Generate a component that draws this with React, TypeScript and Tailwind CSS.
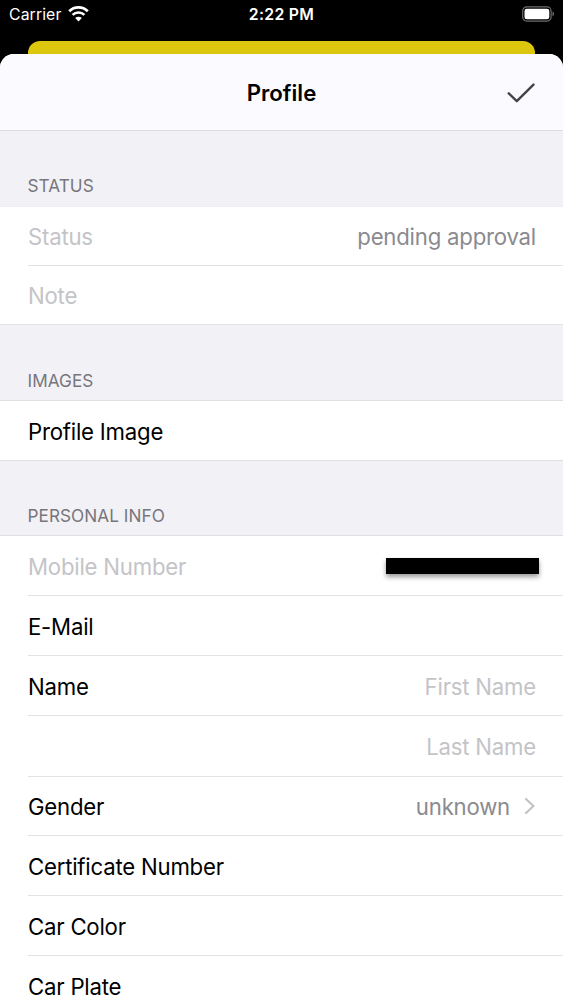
import type { ReactNode } from "react";

function StatusBar() {
  return (
    <div className="grid h-[41px] grid-cols-3 px-[9px] pt-[5px] text-white">
      <div className="flex h-5 items-center gap-[7px]">
        <span className="text-[15.8px] tracking-[0.1px]">Carrier</span>
        <svg width="21" height="16" viewBox="0 0 21 16" fill="none" stroke="currentColor" className="-mt-0.5">
          <path d="M1.2 5.3a13.2 13.2 0 0 1 18.6 0" strokeWidth="2.7" />
          <path d="M4.6 8.8a8.4 8.4 0 0 1 11.8 0" strokeWidth="2.5" />
          <path d="M10.5 15.4 7.2 12a4.7 4.7 0 0 1 6.6 0Z" fill="currentColor" stroke="none" />
        </svg>
      </div>
      <div className="flex h-5 items-center justify-center text-[15.8px] font-semibold tracking-[0.3px]">2:22 PM</div>
      <div className="-mr-px flex h-5 items-center justify-end">
        <svg width="33" height="16" viewBox="0 0 33 16" fill="none" className="-mt-0.5">
          <rect x="0.7" y="0.9" width="28.4" height="14.2" rx="4" stroke="#6d6d6d" strokeWidth="1.2" />
          <rect x="2.5" y="2.7" width="24.8" height="10.6" rx="2.4" fill="white" />
          <path d="M30.5 5.6c2.2 1.1 2.2 3.7 0 4.8Z" fill="#6d6d6d" />
        </svg>
      </div>
    </div>
  );
}

function SectionHeader({ children, className }: { children: ReactNode; className: string }) {
  return (
    <h2 className={`flex items-end bg-[#f2f1f6] pl-[27.5px] text-[17.2px] leading-6 tracking-[0.05px] text-[#77767b] ${className}`}>
      {children}
    </h2>
  );
}

type RowProps = {
  label?: string;
  labelClass?: string;
  value?: string;
  valueClass?: string;
  className?: string;
  children?: ReactNode;
};

function Row({
  label,
  labelClass = "text-black",
  value,
  valueClass = "text-[#c4c4c7]",
  className = "h-[60px]",
  children,
}: RowProps) {
  return (
    <div
      className={`ml-7 flex items-center justify-between border-b border-[#e3e3e5] pr-[27px] text-[22.2px] tracking-[-0.22px] ${className}`}
    >
      <span className={`pt-0.5 ${labelClass}`}>{label}</span>
      <span className="flex items-center">
        {value && <span className={`pt-0.5 ${valueClass}`}>{value}</span>}
        {children}
      </span>
    </div>
  );
}

export default function App() {
  return (
    <div className="flex h-[1000px] w-full flex-col overflow-hidden bg-black font-['Inter','Liberation_Sans',sans-serif]">
      <StatusBar />
      <div className="mx-7 h-[13px] shrink-0 rounded-t-[12px] bg-[#dcc60e]" />

      <main className="flex-1 overflow-hidden rounded-t-[14px] bg-white">
        <header className="grid h-[77px] grid-cols-3 items-center border-b border-[#dddce0] bg-[#fbfafe] pt-0.5 pr-[28px]">
          <span />
          <h1 className="pl-[28px] text-center text-[22.2px] font-semibold text-black">Profile</h1>
          <svg width="28" height="22" viewBox="0 0 28 22" fill="none" stroke="#454449" strokeWidth="2.4" className="justify-self-end">
            <path d="M1.7 11.3 9.8 19.2 26.5 2.6" strokeLinecap="round" strokeLinejoin="round" />
          </svg>
        </header>

        <SectionHeader className="h-[75px] pb-2">STATUS</SectionHeader>
        <div className="border-t border-b border-t-[#efeef2] border-b-[#e3e3e5]">
          <Row label="Status" labelClass="text-[#c4c4c7]" value="pending approval" valueClass="text-[#8b8a8e]" className="h-[59px]" />
          <Row label="Note" labelClass="text-[#c4c4c7]" className="h-[58px] border-b-0" />
        </div>

        <SectionHeader className="h-[75px] pb-[7px]">IMAGES</SectionHeader>
        <div className="border-y border-[#dfdee2]">
          <Row label="Profile Image" className="h-[59px] border-b-0" />
        </div>

        <SectionHeader className="h-[74px] pb-[7px]">PERSONAL INFO</SectionHeader>
        <div className="border-t border-[#dfdee2]">
          <Row label="Mobile Number" labelClass="text-[#c4c4c7]">
            <span className="-mr-[3px] h-4 w-[153px] bg-black shadow-[0_3px_5px_rgba(0,0,0,0.4)]" />
          </Row>
          <Row label="E-Mail" />
          <Row label="Name" value="First Name" />
          <Row value="Last Name" className="h-[61px]" />
          <Row label="Gender" value="unknown" valueClass="text-[#8b8a8e]" className="h-[59px]">
            <svg width="12" height="18" viewBox="0 0 12 18" fill="none" stroke="#c2c2c5" strokeWidth="2.2" className="ml-[14px]">
              <path d="M2 2 9.5 9 2 16" strokeLinecap="round" strokeLinejoin="round" />
            </svg>
          </Row>
          <Row label="Certificate Number" />
          <Row label="Car Color" />
          <Row label="Car Plate" />
        </div>
      </main>
    </div>
  );
}
